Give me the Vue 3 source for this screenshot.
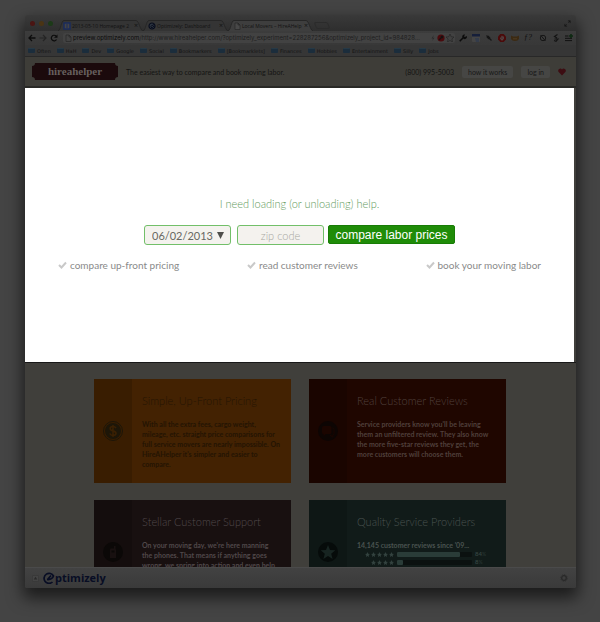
<script setup>
const tabs = [
  { label: '2013-05-10 Homepage 2', icon: 'doc' },
  { label: 'Optimizely: Dashboard', icon: 'opt' },
  { label: 'Local Movers – HireAHelp', icon: 'page', active: true },
]
const bookmarks = ['Often', 'HaH', 'Dev', 'Google', 'Social', 'Bookmarkers', '[Bookmarklets]', 'Finances', 'Hobbies', 'Entertainment', 'Silly', 'Jobs']
const points = ['compare up-front pricing', 'read customer reviews', 'book your moving labor']
const ratings = [
  { stars: 5, percent: 84 },
  { stars: 4, percent: 8 },
]
const starPath = 'M5 0l1.5 3.4 3.5.4-2.6 2.4.7 3.8L5 8 1.900 10l.7-3.800L0 3.800l3.500-.4z'
</script>

<template>
  <div class="desktop">
    <div class="window">
      <div class="tabbar">
        <div class="lights"><i class="red"></i><i class="yellow"></i><i class="green"></i></div>
        <div class="tabs">
          <div v-for="tab in tabs" :key="tab.label" class="tab" :class="{ active: tab.active }">
            <svg class="tab-shape" viewBox="0 0 86 11" preserveAspectRatio="none" aria-hidden="true">
              <path d="M0 11C3 10 3 1 6 .5H79C82 1 83 10 86 11" />
            </svg>
            <svg v-if="tab.icon === 'doc'" class="fav" viewBox="0 0 8 8"><rect x="1" y="1" width="6" height="6" fill="#444" stroke="#1a2b5c" stroke-width="1.500" /><path d="M4 2v4" stroke="#1a2b5c" /></svg>
            <svg v-else-if="tab.icon === 'opt'" class="fav" viewBox="0 0 8 8"><circle cx="4" cy="4" r="3" fill="#2c3440" stroke="#080d1d" stroke-width="1.200" /><path d="M2.500 4.500L6 2.500M3 5.500Q5 6 6 4" stroke="#080d1d" fill="none" /></svg>
            <svg v-else class="fav" viewBox="0 0 8 8"><path d="M2 1h3l2 2v4.500H2zM5 1v2h2" fill="#484848" stroke="#222" stroke-width=".6" /></svg>
            <span class="tab-label">{{ tab.label }}</span>
            <span class="tab-close">×</span>
          </div>
          <span class="new-tab"></span>
        </div>
        <svg class="expand" viewBox="0 0 8 8"><path d="M5 3l2-2M4.500 1H7v2.500M3 5L1 7M1 4.500V7h2.500" fill="none" stroke="#171717" /></svg>
      </div>

      <div class="toolbar">
        <svg class="nav" viewBox="0 0 8 8"><path d="M7.500 4H1M4 1L1 4l3 3" fill="none" stroke="#0c0c0c" stroke-width="1.300" /></svg>
        <svg class="nav" viewBox="0 0 8 8"><path d="M.5 4H7M4 1l3 3-3 3" fill="none" stroke="#252525" stroke-width="1.200" /></svg>
        <svg class="nav" viewBox="0 0 8 8"><path d="M6.500 5.500A2.800 2.800 0 1 1 6 2" fill="none" stroke="#0c0c0c" stroke-width="1.200" /><path d="M7.500.5v3.300H4z" fill="#0c0c0c" /></svg>
        <div class="address">
          <svg class="fav" viewBox="0 0 8 8"><path d="M2 1h3l2 2v4.500H2zM5 1v2h2" fill="none" stroke="#222" stroke-width=".6" /></svg>
          <span class="url"><b>preview.optimizely.com</b>/http://www.hireahelper.com/?optimizely_experiment=228287256&amp;optimizely_project_id=984828...</span>
          <svg class="ext small" viewBox="0 0 8 8"><path d="M5 0L2 4.500h2L3 8l3-4.500H4z" fill="#2b2b2b" /></svg>
          <svg class="ext" viewBox="0 0 8 8"><circle cx="4" cy="4" r="3.600" fill="#4a0a0d" /><path d="M2 6l4-4M4 2l2 2" stroke="#151010" stroke-width="1.300" /></svg>
          <svg class="ext" viewBox="0 0 10 10"><path :d="starPath" fill="#404040" stroke="#202020" stroke-width=".7" /></svg>
        </div>
        <div class="extensions">
          <svg class="ext" viewBox="0 0 8 8"><path d="M.7 7.300l4-4" stroke="#0b0b0b" stroke-width="1.600" /><path d="M4 4a2 2 0 0 1 2-3.400L5 2.400l1 .7 1.600-1.200A2 2 0 0 1 4 4" fill="#0b0b0b" /></svg>
          <svg class="ext" viewBox="0 0 8 8"><rect x="0" y="0" width="8" height="8" rx="1" fill="#444" /><path d="M0 0h8v2.500H0z" fill="#161f3a" /><path d="M3 4h4v4H4z" fill="#333b4a" /></svg>
          <svg class="ext" viewBox="0 0 8 8"><path d="M1.500 1.500l5 5" stroke="#161616" stroke-width="1.200" /><path d="M1.500 3.500l2-2 2 2.500-1.500 1.500z" fill="#161616" /></svg>
          <svg class="ext" viewBox="0 0 8 8"><path d="M2.400 0h3.200L8 2.400v3.200L5.600 8H2.400L0 5.600V2.400z" fill="#4b0a0a" /><path d="M2.800 3.500v1.500L4 6.300l1.200-1.300V2.500M4 1.800v3" stroke="#555" fill="none" /></svg>
          <svg class="ext" viewBox="0 0 8 8"><path d="M0 1.500l2 1h4l2-1v3.500Q7 7 4 7T0 5z" fill="#3c2a12" /><path d="M2 4.800h4" stroke="#4d3d25" /></svg>
          <span class="fn">ƒ?</span>
          <svg class="ext" viewBox="0 0 8 8"><circle cx="4" cy="4" r="2.700" fill="none" stroke="#161616" /><path d="M1.500 1l5 6" stroke="#161616" /></svg>
          <svg class="ext" viewBox="0 0 8 8"><path d="M5.500.5L2.500 2.500 5 4M2.500 5h3.500L4 7.300 2 6.500" fill="none" stroke="#141414" stroke-width="1.200" /></svg>
          <svg class="ext" viewBox="0 0 8 8"><path d="M0 2h3.500M0 4.300h7M0 6.600h7" stroke="#111" /><path d="M6 0v4M4 2h4" stroke="#0e2a12" stroke-width="1.600" /></svg>
        </div>
      </div>

      <nav class="bookmarks">
        <a v-for="name in bookmarks" :key="name" href="#"><i class="folder"></i>{{ name }}</a>
      </nav>

      <header class="site-header">
        <a class="brand" href="#">
          <svg class="brand-plate" viewBox="0 0 86 17" preserveAspectRatio="none" aria-hidden="true"><path d="M3 0H83Q83 3 86 3V14Q83 14 83 17H3Q3 14 0 14V3Q3 3 3 0z" fill="#1b0a0c" /></svg>
          <span>hireahelper</span>
        </a>
        <p class="tagline">The easiest way to compare and book moving labor.</p>
        <span class="phone">(800) 995-5003</span>
        <button class="pill" type="button">how it works</button>
        <button class="pill" type="button">log in</button>
        <svg class="heart" viewBox="0 0 8 8" aria-label="Favorite"><path d="M4 7.500L.7 4A2 2 0 0 1 4 1.500 2 2 0 0 1 7.300 4z" fill="#3d0d12" /></svg>
      </header>

      <section class="spotlight">
        <h1>I need loading (or unloading) help.</h1>
        <form class="quote" @submit.prevent>
          <div class="date">
            <select aria-label="Moving date"><option>06/02/2013</option></select>
            <svg viewBox="0 0 8 8" aria-hidden="true"><path d="M0 0h8L4 8z" fill="#4f4f4b" /></svg>
          </div>
          <input class="zip" type="text" placeholder="zip code" aria-label="Zip code" />
          <button class="submit" type="submit">compare labor prices</button>
        </form>
        <ul class="points">
          <li v-for="point in points" :key="point">
            <svg viewBox="0 0 9 8" aria-hidden="true"><path d="M1 4l2.500 2.500L8 1.500" fill="none" stroke="#c9c9c9" stroke-width="2" /></svg>{{ point }}
          </li>
        </ul>
      </section>

      <main class="features">
        <article class="card orange">
          <div class="side"><svg viewBox="0 0 20 20"><circle cx="10" cy="10" r="9.500" fill="none" stroke="#1d1608" /><circle cx="10" cy="10" r="8" fill="#1d1608" /><path d="M13 7.200Q12 5.500 10 5.500 7.200 5.500 7.200 7.500 7.200 9.300 10 9.900 13 10.500 13 12.300 13 14.500 10 14.500 7.700 14.500 6.800 12.500M10 4v12" fill="none" stroke="#3a2003" stroke-width="1.600" /></svg></div>
          <div class="copy">
            <h2>Simple, Up-Front Pricing</h2>
            <p>With all the extra fees, cargo weight,<br />mileage, etc. straight price comparisons for<br />full service movers are nearly impossible. On<br />HireAHelper it's simpler and easier to<br />compare.</p>
          </div>
        </article>
        <article class="card red-card">
          <div class="side"><svg viewBox="0 0 20 20"><circle cx="10" cy="10" r="10" fill="#0d0503" /><path d="M5.500 5H12q1.500 0 1.500 1.500v5Q13.500 13 12 13H8l-2.500 2V13Q4 13 4 11.500v-5Q4 5 5.500 5z" fill="#1b0500" /><path d="M14.500 7q1.500 0 1.500 1.500v4q0 1.500-1.200 1.500v2L12 14" fill="none" stroke="#1b0500" /></svg></div>
          <div class="copy">
            <h2>Real Customer Reviews</h2>
            <p>Service providers know you'll be leaving<br />them an unfiltered review. They also know<br />the more five-star reviews they get, the<br />more customers will choose them.</p>
          </div>
        </article>
        <article class="card plum">
          <div class="side"><svg viewBox="0 0 20 20"><circle cx="10" cy="10" r="10" fill="#0b0807" /><path d="M7.500 6.500h3.500V4h1.500v3q.5.300.5 1v8H7V8q0-1 .5-1.500z" fill="#181010" /><path d="M8.500 8.500h3v2h-3z" fill="#0b0807" /></svg></div>
          <div class="copy">
            <h2>Stellar Customer Support</h2>
            <p>On your moving day, we're here manning<br />the phones. That means if anything goes<br />wrong, we spring into action and even help</p>
          </div>
        </article>
        <article class="card teal">
          <div class="side"><svg viewBox="0 0 20 20"><circle cx="10" cy="10" r="10" fill="#060b0a" /><path d="M10 3l2 5 5.300.3-4.100 3.400 1.400 5.200L10 14l-4.600 2.900 1.400-5.200L2.700 8.300 8 8z" fill="#172421" /></svg></div>
          <div class="copy">
            <h2>Quality Service Providers</h2>
            <p>14,145 customer reviews since '09...</p>
            <div v-for="row in ratings" :key="row.stars" class="rating">
              <span class="stars"><svg v-for="n in row.stars" :key="n" viewBox="0 0 10 10"><path :d="starPath" fill="#33423f" /></svg></span>
              <span class="bar"><i :style="{ width: row.percent + '%' }"></i></span>
              <span class="pct">{{ row.percent }}<small>%</small></span>
            </div>
          </div>
        </article>
      </main>

      <footer class="optbar">
        <svg class="toggle" viewBox="0 0 8 8"><rect x=".5" y=".5" width="7" height="7" rx="1" fill="#444" stroke="#393939" /><path d="M2 5l2-3 2 3z" fill="#292929" /></svg>
        <span class="optlogo">
          <svg viewBox="0 0 12 12"><path d="M9.500 10A5 5 0 1 1 10.500 4Q9 8 4 7.500M4.500 7.500L8 3.500" fill="none" stroke="#080d24" stroke-width="1.700" /></svg>ptimizely
        </span>
        <svg class="gear" viewBox="0 0 8 8"><circle cx="4" cy="4" r="2.300" fill="none" stroke="#2a2a2a" stroke-width="1.300" /><circle cx="4" cy="4" r="3.300" fill="none" stroke="#2d2d2d" stroke-width=".8" stroke-dasharray="1.500 1" /></svg>
      </footer>
    </div>
  </div>
</template>

<style>
body { margin: 0; background: #444; }
</style>

<style scoped>
* { box-sizing: border-box; }
svg { display: block; flex: none; }
p, h1, h2, ul { margin: 0; padding: 0; font-weight: 400; }
a { color: inherit; text-decoration: none; }
button, input, select { font: inherit; margin: 0; }
.desktop { padding: 15px 24px 34px 25px; font-family: Lato, "Liberation Sans", sans-serif; }
.window { border-radius: 3px 3px 2px 2px; background: #403f3b; box-shadow: 0 8px 16px 2px rgba(0, 0, 0, .6); }

.tabbar { display: flex; align-items: flex-end; height: 16px; padding-right: 5px; border-radius: 3px 3px 0 0; background: linear-gradient(#393939, #2e2e2e); font: 5px "Open Sans", sans-serif; color: #121212; }
.lights { display: flex; gap: 4px; padding: 0 5px 5px; }
.lights i { width: 5px; height: 5px; border-radius: 50%; }
.red { background: #4a1513; }
.yellow { background: #4a3414; }
.green { background: #1c3a18; }
.tabs { display: flex; flex: 1; min-width: 0; }
.tab { position: relative; display: flex; align-items: center; gap: 1px; width: 85px; height: 11px; padding: 0 5px; }
.tab-shape { position: absolute; inset: 0; width: 100%; height: 100%; fill: #343434; stroke: #262626; }
.active .tab-shape { fill: #3e3e3e; }
.fav { position: relative; width: 8px; height: 8px; }
.tab-label { position: relative; flex: 1; white-space: nowrap; line-height: 8px; }
.tab-close { position: relative; font-size: 7px; line-height: 8px; }
.new-tab { width: 14px; height: 7px; margin: 2px; border: 1px solid #2b2b2b; border-radius: 2px; transform: skewX(20deg); }
.expand { width: 7px; height: 7px; margin-bottom: 4px; }

.toolbar { display: flex; align-items: center; gap: 3px; height: 14px; padding: 0 3px; background: linear-gradient(#3c3c3c, #383838); }
.nav { width: 8px; height: 8px; }
.address { display: flex; flex: 1; align-items: center; gap: 1px; min-width: 0; height: 10px; margin-left: 2px; padding: 0 1px; border-radius: 2px; background: #424242; }
.url { flex: 1; overflow: hidden; white-space: nowrap; font: 6px/10px Inter, sans-serif; color: #1e1e1e; }
.url b { font-weight: 400; color: #0a0a0a; }
.ext { width: 8px; height: 8px; }
.small { width: 6px; }
.extensions { display: flex; align-items: center; gap: 5px; margin-left: 1px; }
.fn { width: 10px; font: italic 8px/8px "Liberation Serif", serif; color: #111; }

.bookmarks { display: flex; align-items: center; gap: 6px; height: 12px; padding: 0 3px; border-bottom: 1px solid #282828; background: #363636; font: 5px/8px "DejaVu Sans", sans-serif; color: #141414; white-space: nowrap; overflow: hidden; }
.bookmarks a { display: flex; align-items: center; gap: 2px; }
.folder { width: 7px; height: 5px; border-radius: 1px; background: #1b2d3c; border-top: 1px solid #263946; }

.site-header { display: flex; align-items: center; height: 31px; padding: 0 10px 0 7px; border-bottom: 2px solid #292926; background: #3e3d38; color: #141413; font-size: 7px; white-space: nowrap; }
.brand { position: relative; width: 86px; height: 17px; color: #665f5d; font: 700 11px/16px "Liberation Serif", serif; text-align: center; }
.brand-plate { position: absolute; inset: 0; width: 100%; height: 100%; }
.brand span { position: relative; }
.tagline { flex: 1; margin-left: 8px; }
.phone { margin-right: 8px; }
.pill { height: 12px; margin-right: 8px; padding: 0 6px; border: 0; border-radius: 2px; background: #464644; color: #181818; font-size: 7px; line-height: 12px; }
.heart { width: 8px; height: 8px; }

.spotlight { padding: 109px 33px 90px; margin-right: 2px; background: #fff; color: #8a8a8a; font-weight: 300; text-align: center; }
.spotlight h1 { color: #5f9a5c; font-size: 11px; line-height: 14px; font-weight: 300; }
.quote { display: flex; justify-content: center; gap: 6px; margin-top: 14px; }
.date { position: relative; width: 87px; height: 20px; }
.date select, .zip { display: block; width: 100%; height: 20px; border: 1px solid #72bf69; border-radius: 3px; background: #f4f2ee; color: #686862; font-size: 11px; outline: 0; }
.date select { padding: 0 0 0 7px; appearance: none; font-weight: 400; }
.date svg { position: absolute; top: 7px; right: 7px; width: 7px; height: 7px; }
.zip { flex: none; width: 87px; padding: 0; text-align: center; }
.zip::placeholder { color: #a8a8a2; opacity: 1; }
.submit { height: 19px; width: 127px; margin-left: -2px; padding: 0; border: 1px solid #187c06; border-radius: 2px; background: #1f8c08; color: #fff; font: 12px "Liberation Sans", sans-serif; }
.points { display: flex; justify-content: space-between; margin-top: 13px; list-style: none; font-size: 10px; line-height: 14px; }
.points li { display: flex; align-items: center; gap: 3px; }
.points svg { width: 9px; height: 8px; }

.features { display: grid; grid-template-columns: 1fr 1fr; grid-template-rows: 104px 67px; gap: 17px 18px; padding: 16px 70px 0 69px; border-top: 1px solid #191919; background: #403f3b; }
.card { display: flex; overflow: hidden; min-width: 0; }
.side { display: flex; flex: none; justify-content: center; width: 38px; height: 104px; align-items: center; background: rgba(0, 0, 0, .14); }
.side svg { width: 20px; height: 20px; }
.copy { flex: 1; min-width: 0; padding: 15px 0 0 10px; white-space: nowrap; }
.copy h2 { font-size: 11px; line-height: 14px; font-weight: 300; }
.copy p { margin-top: 11px; font-size: 7px; line-height: 10px; font-weight: 700; }
.orange { background: #432202; color: #241402; }
.red-card { background: #1f0600; color: #50403c; }
.plum { background: #181010; color: #50484a; }
.teal { background: #111b19; color: #4a5350; }
.rating { display: flex; align-items: center; gap: 3px; height: 8px; }
.stars { display: flex; justify-content: flex-end; gap: 1px; width: 37px; }
.stars svg { width: 5px; height: 5px; }
.bar { width: 75px; height: 5px; border-radius: 1px; background: #0b1110; }
.bar i { display: block; height: 5px; border-radius: 1px; background: #2a3c38; }
.pct { color: #33423f; font-size: 6px; line-height: 8px; font-weight: 700; }
.pct small { font-size: 5px; color: #24312e; }

.optbar { display: flex; align-items: center; height: 21px; padding: 0 8px 0 7px; border-top: 1px solid #4a4a4a; border-radius: 0 0 2px 2px; background: linear-gradient(#424242, #3a3a3a); }
.toggle { width: 7px; height: 7px; }
.optlogo { display: flex; flex: 1; align-items: center; margin-left: 4px; color: #080d24; font: 700 11px/14px "Open Sans", sans-serif; }
.optlogo svg { width: 12px; height: 12px; }
.gear { width: 8px; height: 8px; }
</style>
